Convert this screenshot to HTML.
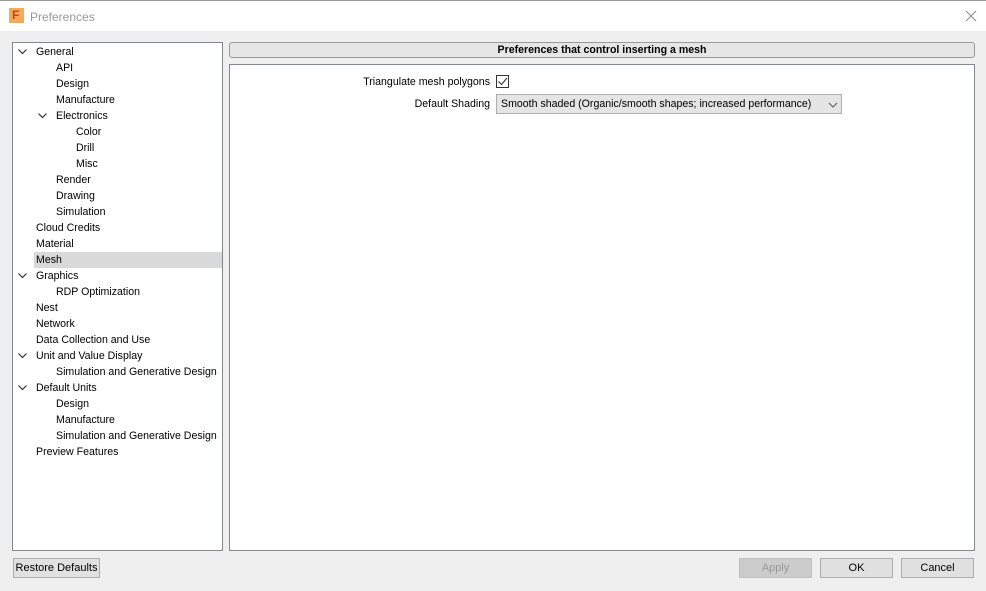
<!DOCTYPE html>
<html><head><meta charset="utf-8"><style>
*{margin:0;padding:0;box-sizing:border-box}
body{width:986px;height:591px;background:#efefef;font-family:"Liberation Sans",Arial,sans-serif;font-size:10.6px;color:#000;position:relative;overflow:hidden}
.title{position:absolute;left:0;top:0;width:986px;height:31px;background:#fff;border-top:1px solid #999}
.title .t{position:absolute;left:30px;top:9px;font-size:12px;color:#999}
.logo{position:absolute;left:9px;top:7px;width:15px;height:15px;background:#f7a85a}
.logo span{position:absolute;left:3px;top:0;font-size:12px;font-weight:bold;color:#c0441c}
.tree{position:absolute;left:12px;top:42px;width:211px;height:509px;background:#fff;border:1px solid #828790}
.it{position:absolute;height:16px;line-height:16px;white-space:nowrap;padding-top:1px}
.sel{position:absolute;left:21px;top:209px;width:188px;height:16px;background:#d9d9d9}
.chev{position:absolute;width:9px;height:6px}
.hdr{position:absolute;left:229px;top:42px;width:746px;height:16px;background:#e6e6e6;border:1px solid #999;border-radius:3px;text-align:center;font-weight:bold;line-height:15px}
.box{position:absolute;left:229px;top:64px;width:746px;height:487px;background:#fff;border:1px solid #828790}
.lbl{position:absolute;text-align:right;white-space:nowrap}
.cb{position:absolute;left:496px;top:75px;width:13px;height:13px;border:1px solid #333;background:#fff}
.sel2{position:absolute;left:496px;top:94px;width:346px;height:20px;background:#e5e5e5;border:1px solid #adadad;padding-left:4px;line-height:19px;white-space:nowrap}
.btn{position:absolute;height:20px;border:1px solid #adadad;background:#e1e1e1;text-align:center;line-height:19px;font-size:11px;white-space:nowrap}
</style></head><body>
<div class="title"><div class="logo"><span>F</span></div><div class="t">Preferences</div>
<svg width="12" height="12" style="position:absolute;left:965px;top:9px"><path d="M1 1L11 11M11 1L1 11" stroke="#888" stroke-width="1"/></svg></div>
<div class="tree">
<div class="sel"></div>
<svg class="chev" style="left:5px;top:6px"><path d="M0.5 0.5L4.5 4.5L8.5 0.5" stroke="#333" stroke-width="1.2" fill="none"/></svg>
<div class="it" style="left:23px;top:0">General</div>
<div class="it" style="left:43px;top:16px">API</div>
<div class="it" style="left:43px;top:32px">Design</div>
<div class="it" style="left:43px;top:48px">Manufacture</div>
<svg class="chev" style="left:25px;top:70px"><path d="M0.5 0.5L4.5 4.5L8.5 0.5" stroke="#333" stroke-width="1.2" fill="none"/></svg>
<div class="it" style="left:43px;top:64px">Electronics</div>
<div class="it" style="left:63px;top:80px">Color</div>
<div class="it" style="left:63px;top:96px">Drill</div>
<div class="it" style="left:63px;top:112px">Misc</div>
<div class="it" style="left:43px;top:128px">Render</div>
<div class="it" style="left:43px;top:144px">Drawing</div>
<div class="it" style="left:43px;top:160px">Simulation</div>
<div class="it" style="left:23px;top:176px">Cloud Credits</div>
<div class="it" style="left:23px;top:192px">Material</div>
<div class="it" style="left:23px;top:208px">Mesh</div>
<svg class="chev" style="left:5px;top:230px"><path d="M0.5 0.5L4.5 4.5L8.5 0.5" stroke="#333" stroke-width="1.2" fill="none"/></svg>
<div class="it" style="left:23px;top:224px">Graphics</div>
<div class="it" style="left:43px;top:240px">RDP Optimization</div>
<div class="it" style="left:23px;top:256px">Nest</div>
<div class="it" style="left:23px;top:272px">Network</div>
<div class="it" style="left:23px;top:288px">Data Collection and Use</div>
<svg class="chev" style="left:5px;top:310px"><path d="M0.5 0.5L4.5 4.5L8.5 0.5" stroke="#333" stroke-width="1.2" fill="none"/></svg>
<div class="it" style="left:23px;top:304px">Unit and Value Display</div>
<div class="it" style="left:43px;top:320px">Simulation and Generative Design</div>
<svg class="chev" style="left:5px;top:342px"><path d="M0.5 0.5L4.5 4.5L8.5 0.5" stroke="#333" stroke-width="1.2" fill="none"/></svg>
<div class="it" style="left:23px;top:336px">Default Units</div>
<div class="it" style="left:43px;top:352px">Design</div>
<div class="it" style="left:43px;top:368px">Manufacture</div>
<div class="it" style="left:43px;top:384px">Simulation and Generative Design</div>
<div class="it" style="left:23px;top:400px">Preview Features</div>
</div>
<div class="hdr">Preferences that control inserting a mesh</div>
<div class="box"></div>
<div class="lbl" style="right:496px;top:76px">Triangulate mesh polygons</div>
<div class="cb"><svg width="11" height="11" style="position:absolute;left:0;top:0"><path d="M1.5 5.5 L4.5 8.5 L10 2" stroke="#333" stroke-width="1.1" fill="none"/></svg></div>
<div class="lbl" style="right:496px;top:98px">Default Shading</div>
<div class="sel2">Smooth shaded (Organic/smooth shapes; increased performance)<svg width="10" height="6" style="position:absolute;right:3px;top:7px"><path d="M1 1 L5 5 L9 1" stroke="#555" fill="none"/></svg></div>
<div class="btn" style="left:13px;top:558px;width:87px;">Restore Defaults</div>
<div class="btn" style="left:739px;top:558px;width:73px;background:#ccc;border-color:#bfbfbf;color:#999">Apply</div>
<div class="btn" style="left:820px;top:558px;width:73px">OK</div>
<div class="btn" style="left:901px;top:558px;width:73px">Cancel</div>
</body></html>
